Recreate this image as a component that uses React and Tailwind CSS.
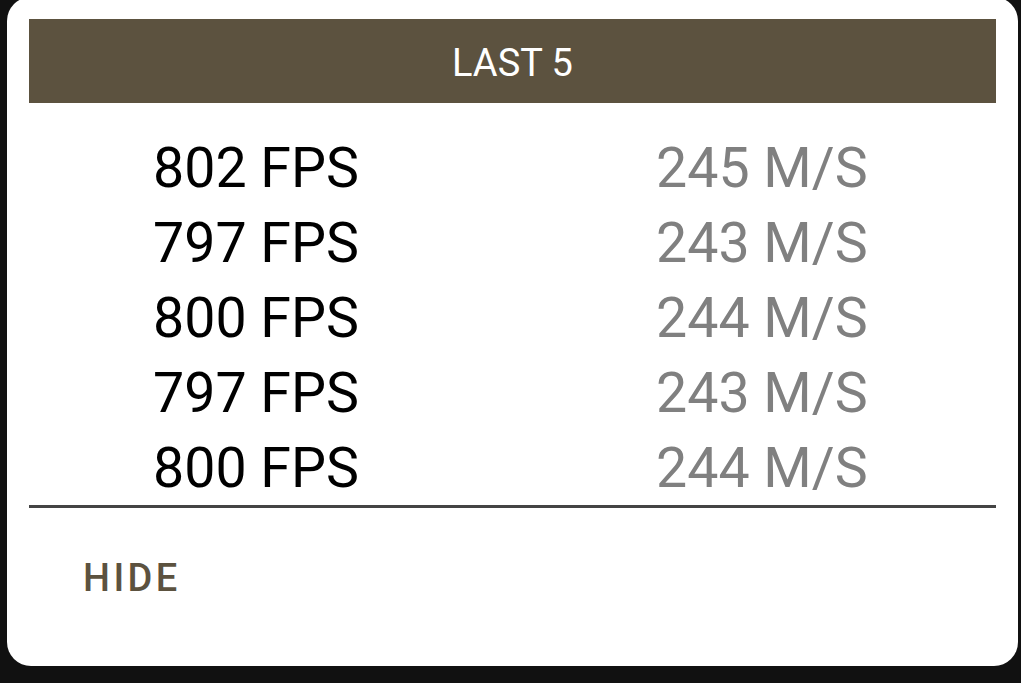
export default function App() {
  const rows = [
    ["802 FPS", "245 M/S"],
    ["797 FPS", "243 M/S"],
    ["800 FPS", "244 M/S"],
    ["797 FPS", "243 M/S"],
    ["800 FPS", "244 M/S"],
  ];
  return (
    <div
      className="w-[1021px] h-[683px] overflow-hidden bg-[#111111]"
      style={{ fontFamily: "Roboto, 'Liberation Sans', sans-serif" }}
    >
      <div className="ml-[7px] mt-[-3px] w-[1011px] h-[669px] bg-white rounded-[24px] px-[22px] pt-[22px] flex flex-col">
        <div className="h-[84px] bg-[#5c523f] flex items-center justify-center text-white text-[38px] leading-none pt-[3px]">
          LAST 5
        </div>
        <div className="mt-[27px] flex flex-col">
          {rows.map(([a, b], i) => (
            <div key={i} className="h-[75px] flex items-center text-[55.5px] leading-none pt-[2px]">
              <div className="w-[483px] pl-[124px] text-black">{a}</div>
              <div className="w-[483px] pl-[144px] text-[#808080]">{b}</div>
            </div>
          ))}
        </div>
        <div className="h-[3px] bg-[#444444]" />
        <div className="pl-[54px] pt-[51px] text-[38px] leading-none font-medium tracking-[0.09em] text-[#5c523f]">
          HIDE
        </div>
      </div>
    </div>
  );
}
